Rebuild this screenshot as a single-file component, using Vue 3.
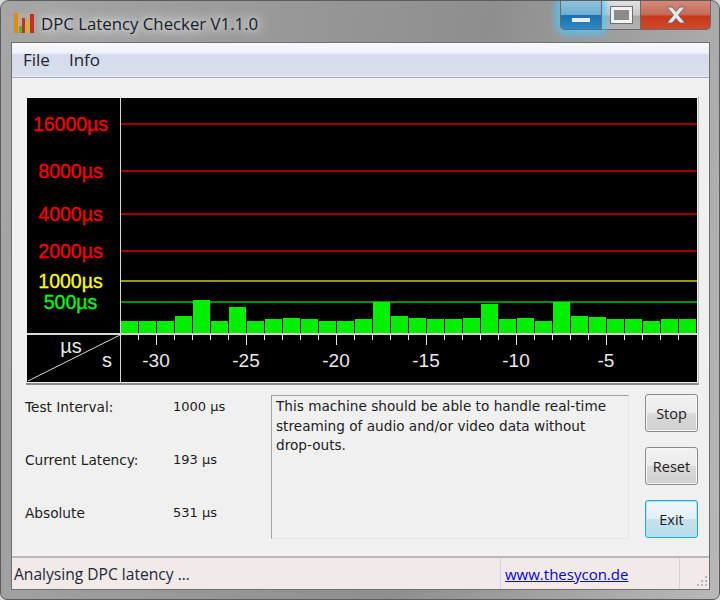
<script setup>
const tops = [321,321,321,316,300,321,307,321,319,318,319,321,321,319,302,316,318,319,319,318,304,319,318,321,302,316,317,319,319,321,319,319]
const bars = tops.map((t, i) => ({ x: 1 + 18 * i, y: t, h: 333 - t }))
const grid = [
  { label: '16000µs', y: 124, line: '#a00000', text: '#ff0000' },
  { label: '8000µs', y: 171, line: '#a00000', text: '#ff0000' },
  { label: '4000µs', y: 214, line: '#a00000', text: '#ff0000' },
  { label: '2000µs', y: 251, line: '#a00000', text: '#ff0000' },
  { label: '1000µs', y: 281, line: '#989800', text: '#ffff00' },
  { label: '500µs', y: 302, line: '#009000', text: '#00ff00' }
]
const ticks = Array.from({ length: 31 }, (_, i) => 138.5 + 18 * i)
const labels = ['-30', '-25', '-20', '-15', '-10', '-5']
const stats = [
  { name: 'Test Interval:', value: '1000 µs' },
  { name: 'Current Latency:', value: '193 µs' },
  { name: 'Absolute', value: '531 µs' }
]
</script>

<template>
  <div class="window">
    <header class="titlebar">
      <svg class="appicon" width="22" height="22" viewBox="0 0 22 22">
        <rect x="1" y="1" width="20" height="20" fill="#c9b48a" opacity=".45" />
        <rect x="1" y="1" width="4" height="20" fill="#e08a10" />
        <rect x="6" y="14" width="3" height="7" fill="#4fb82a" />
        <rect x="9" y="6" width="3" height="15" fill="#c8301c" />
        <rect x="13" y="9" width="3" height="12" fill="#d9b020" />
        <rect x="17" y="2" width="4" height="19" fill="#c8281c" />
      </svg>
      <span class="title">DPC Latency Checker V1.1.0</span>
      <div class="controls">
        <div class="ctl min"><i></i></div>
        <div class="ctl max"><i></i></div>
        <div class="ctl close">
          <svg width="24" height="18" viewBox="0 0 24 18">
            <path d="M3 1h5l4 4.5L16 1h5l-6.5 8L21 17h-5l-4-4.5L8 17H3l6.5-8z" fill="#e8e8e8" stroke="#6e6e6e" stroke-width="1" />
          </svg>
        </div>
      </div>
    </header>

    <div class="client">
      <nav class="menu">
        <span>File</span>
        <span>Info</span>
      </nav>

      <main class="body">
        <svg class="chart" width="672" height="286" viewBox="26 97 672 286">
          <rect x="27" y="98" width="670" height="284" fill="#000" />
          <g v-for="g in grid" :key="g.label">
            <rect x="121" width="576" :y="g.y - 1" height="2" :fill="g.line" />
            <text x="70.5" :y="g.y + 7" text-anchor="middle" class="ylabel" :fill="g.text" :stroke="g.text">{{ g.label }}</text>
          </g>
          <rect v-for="b in bars" :key="b.x" :x="120 + b.x" :y="b.y" width="17" :height="b.h" fill="#00f000" />
          <rect x="120" y="98" width="1" height="284" fill="#d8d8d8" />
          <rect x="27" y="333" width="670" height="2" fill="#d8d8d8" />
          <line x1="120" x2="28" y1="335" y2="381" stroke="#d8d8d8" />
          <rect v-for="(t, i) in ticks" :key="t" :x="t - .5" y="335" width="1" :height="(i - 1) % 5 === 0 ? 10 : 5" fill="#e8e8e8" />
          <text x="71" y="353" text-anchor="middle" class="axis">µs</text>
          <text x="107" y="367" text-anchor="middle" class="axis">s</text>
          <text v-for="(l, i) in labels" :key="l" :x="156 + 90 * i" y="367" text-anchor="middle" class="xlabel">{{ l }}</text>
        </svg>

        <section class="lower">
          <div class="stats">
            <div v-for="s in stats" :key="s.name" class="stat">
              <span class="stat-name">{{ s.name }}</span>
              <span class="stat-value">{{ s.value }}</span>
            </div>
          </div>
          <div class="message">This machine should be able to handle real-time streaming of audio and/or video data without <span class="nowrap">drop-outs.</span></div>
          <div class="buttons">
            <button>Stop</button>
            <button>Reset</button>
            <button class="focus">Exit</button>
          </div>
        </section>
      </main>

      <footer class="status">
        <span class="status-text">Analysing DPC latency ...</span>
        <a class="link">www.thesycon.de</a>
        <span class="grip">
          <svg width="14" height="14" viewBox="0 0 14 14" fill="#b8b8b8">
            <rect x="10" y="1" width="2" height="2" /><rect x="6" y="5" width="2" height="2" /><rect x="10" y="5" width="2" height="2" />
            <rect x="2" y="9" width="2" height="2" /><rect x="6" y="9" width="2" height="2" /><rect x="10" y="9" width="2" height="2" />
          </svg>
        </span>
      </footer>
    </div>
  </div>
</template>

<style>
html, body { margin: 0; background: #d8d8d8; }
</style>

<style scoped>
.window {
  box-sizing: border-box;
  width: 720px;
  height: 600px;
  display: flex;
  flex-direction: column;
  padding: 0 9px 9px 10px;
  border: 1px solid #5c5c5c;
  border-radius: 9px 9px 7px 7px;
  background: linear-gradient(100deg, #a6a6a6 0%, #9a9a9a 30%, #8e8e8e 60%, #b8b8b8 100%);
  font-family: "DejaVu Sans", "Open Sans", sans-serif;
  color: #1c1c1c;
  overflow: hidden;
}
.titlebar {
  height: 41px;
  flex: none;
  display: flex;
  align-items: flex-start;
}
.appicon { margin: 11px 0 0 2px; flex: none; }
.title {
  margin: 11px 0 0 6px;
  font: 16.8px/23px "Open Sans", "Noto Sans", sans-serif;
  color: #16202c;
  text-shadow: 0 0 6px #e4e4e4, 0 0 12px #e4e4e4, 0 0 16px #dcdcdc;
}
.controls {
  margin-left: auto;
  margin-right: -1px;
  display: flex;
  height: 29px;
}
.ctl {
  display: flex;
  align-items: center;
  justify-content: center;
  height: 29px;
  box-sizing: border-box;
  border: 1px solid #6a6a6a;
  border-top: 0;
}
.min {
  width: 42px;
  border-radius: 0 0 0 5px;
  background: linear-gradient(#8fc2dc 0%, #6eaed0 48%, #1a70ad 52%, #2a8ccb 100%);
  box-shadow: 0 0 9px 3px #4cc8ff;
  position: relative;
  z-index: 1;
}
.min i { display: block; width: 18px; height: 4px; margin-top: 9px; background: #ecece0; }
.max {
  width: 38px;
  border-left: 0;
  border-right: 0;
  background: linear-gradient(#e2e2e2, #c6c6c6 50%, #a8a8a8 55%, #b4b4b4);
}
.max i { display: block; box-sizing: border-box; width: 21px; height: 16px; border: 3px solid #f2f2f2; outline: 1px solid #707070; background: #8c8c8c; }
.close {
  width: 71px;
  border-radius: 0 0 5px 0;
  background: linear-gradient(#d58a7a, #c66a58 48%, #c8381c 55%, #cf4a2a);
}
.client {
  flex: 1;
  display: flex;
  flex-direction: column;
  background: #f0f0f0;
  border: 1px solid #6f6f6f;
  min-height: 0;
}
.menu {
  height: 35px;
  flex: none;
  box-sizing: border-box;
  display: flex;
  align-items: center;
  gap: 19px;
  padding: 0 0 2px 11px;
  font: 17px "Open Sans", "Noto Sans", sans-serif;
  background: linear-gradient(#f8f9fc 0%, #eef1f7 28%, #d4dbeb 36%, #d8deec 90%, #e4e8f2 100%);
  border-bottom: 1px solid #a8aec8;
}
.menu span { color: #1b2430; }
.body {
  flex: 1;
  min-height: 0;
  padding: 19px 12px 0 14px;
  display: flex;
  flex-direction: column;
}
.chart {
  display: block;
  flex: none;
  background: #f0f0f0;
  border-right: 1px solid #bcbcbc;
  border-bottom: 2px solid #8a8a8a;
  box-sizing: content-box;
  margin-bottom: 10px;
}
.ylabel { font: 19.5px "Liberation Sans", Arial, sans-serif; stroke-width: .3px; }
.axis { font: 20px "Liberation Sans", Arial, sans-serif; fill: #e8e8e8; }
.xlabel { font: 19px "Liberation Sans", Arial, sans-serif; fill: #e8e8e8; }
.lower {
  display: flex;
  height: 145px;
}
.stats {
  width: 246px;
  flex: none;
  display: flex;
  flex-direction: column;
  margin-left: -1px;
  padding-top: 2px;
  gap: 33px;
  font-size: 13.7px;
  line-height: 20px;
}
.stat { display: flex; }
.stat-name { width: 148px; flex: none; }
.stat-value { font-size: 13px; }
.message {
  box-sizing: border-box;
  width: 358px;
  height: 144px;
  flex: none;
  padding: 1px 4px;
  font-size: 13.65px;
  line-height: 19.5px;
  border-top: 1px solid #a0a0a0;
  border-left: 1px solid #a0a0a0;
  border-right: 1px dotted #dcdcdc;
  border-bottom: 1px dotted #dcdcdc;
}
.nowrap { white-space: nowrap; }
.buttons {
  margin: -1px 0 0 16px;
  display: flex;
  flex-direction: column;
  gap: 15px;
}
button {
  width: 53px;
  height: 38px;
  padding: 0;
  box-sizing: border-box;
  border: 1px solid #8a8a8a;
  border-radius: 3px;
  font: 14.5px "Open Sans", "Noto Sans", sans-serif;
  color: #1c1c1c;
  background: linear-gradient(#f2f2f2 0%, #ebebeb 48%, #dadada 52%, #cfcfcf 100%);
  box-shadow: inset 0 0 0 1px #f6f6f6;
}
button.focus {
  border-color: #2ba4d8;
  box-shadow: inset 0 0 0 1px #a8e4f8;
  background: linear-gradient(#eef6fa 0%, #e4f0f6 48%, #c6e0ec 52%, #b8dcea 100%);
}
.status {
  margin-top: auto;
  height: 33px;
  flex: none;
  box-sizing: border-box;
  display: flex;
  align-items: center;
  background: #f2e9e9;
  border-top: 2px solid #b8b8b8;
  font: 15.6px "Open Sans", "Noto Sans", sans-serif;
}
.status-text { width: 488px; flex: none; padding-left: 2px; box-sizing: border-box; color: #1b2a38; }
.link {
  box-sizing: border-box;
  width: 180px;
  height: 100%;
  flex: none;
  display: flex;
  align-items: center;
  padding-left: 4px;
  font-size: 15px;
  color: #0000ff;
  text-decoration: underline;
  border-left: 1px solid #d4d4d4;
  border-right: 1px solid #d4d4d4;
}
.grip { flex: 1; display: flex; justify-content: flex-end; align-self: flex-end; }
</style>
